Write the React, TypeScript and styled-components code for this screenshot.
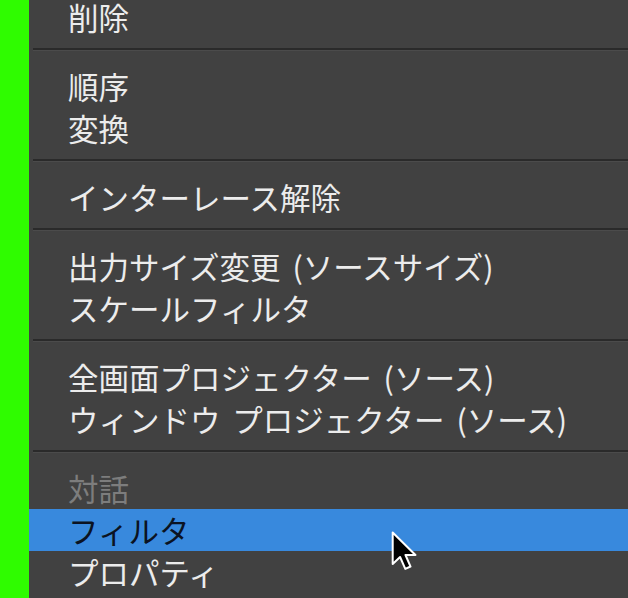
import React from 'react';
import styled, { createGlobalStyle } from 'styled-components';

const GlobalStyle = createGlobalStyle`
  html, body {
    margin: 0;
    padding: 0;
    background: #2ffc00;
    overflow: hidden;
  }
  body {
    font-family: "Noto Sans CJK JP", "Noto Sans", sans-serif;
  }
`;

const Screen = styled.div`
  position: relative;
  display: flex;
  width: 628px;
  height: 598px;
  overflow: hidden;
`;

const GreenStrip = styled.div`
  width: 29px;
  flex: none;
  background: #2ffc00;
`;

const Menu = styled.div`
  flex: 1;
  display: flex;
  flex-direction: column;
  margin-top: -4px;
  background: #414141;
  min-height: 610px;
`;

const Item = styled.div<{ $active?: boolean; $disabled?: boolean }>`
  height: 42px;
  line-height: 42px;
  padding-left: 39px;
  font-size: 30.5px;
  word-spacing: 5px;
  white-space: nowrap;
  color: ${(p) => (p.$active ? '#0b1322' : p.$disabled ? '#7d7d7d' : '#ececec')};
  background: ${(p) => (p.$active ? '#3889dd' : 'transparent')};
`;

const Separator = styled.div`
  margin: 10px 0 14px 4px;
  height: 2px;
  background: #2a2a2a;
  border-bottom: 1px solid #4b4b4b;
`;

const Cursor = styled.svg`
  position: absolute;
  left: 391px;
  top: 531px;
  width: 28px;
  height: 40px;
`;

type Entry = { label: string; active?: boolean; disabled?: boolean } | 'sep';

const entries: Entry[] = [
  { label: '削除' },
  'sep',
  { label: '順序' },
  { label: '変換' },
  'sep',
  { label: 'インターレース解除' },
  'sep',
  { label: '出力サイズ変更 (ソースサイズ)' },
  { label: 'スケールフィルタ' },
  'sep',
  { label: '全画面プロジェクター (ソース)' },
  { label: 'ウィンドウ プロジェクター (ソース)' },
  'sep',
  { label: '対話', disabled: true },
  { label: 'フィルタ', active: true },
  { label: 'プロパティ' },
];

export default function App() {
  return (
    <Screen>
      <GlobalStyle />
      <GreenStrip />
      <Menu>
        {entries.map((e, i) =>
          e === 'sep' ? (
            <Separator key={i} />
          ) : (
            <Item key={i} $active={e.active} $disabled={e.disabled}>
              {e.label}
            </Item>
          )
        )}
      </Menu>
      <Cursor viewBox="0 0 18 26">
        <path
          d="M1 1 L1 21.5 L5.8 16.9 L9.2 24.6 L12.6 23.1 L9.3 15.6 L15.8 15.6 Z"
          fill="#000"
          stroke="#fff"
          strokeWidth="1.3"
          strokeLinejoin="round"
        />
      </Cursor>
    </Screen>
  );
}
